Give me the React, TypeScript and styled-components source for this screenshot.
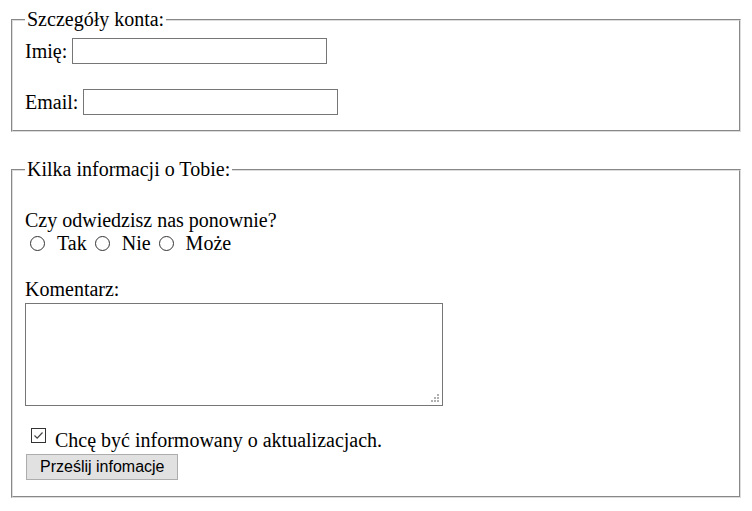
import React from "react";
import styled, { createGlobalStyle } from "styled-components";

const GlobalStyle = createGlobalStyle`
  body {
    margin: 8px;
    font-family: "Liberation Serif", "Times New Roman", serif;
    font-size: 20px;
    line-height: 23px;
    color: #000;
    background: #fff;
  }
`;

const Fieldset = styled.fieldset<{ $spaced?: boolean }>`
  margin: ${(p) => (p.$spaced ? "26px" : "0")} 3px 0 3px;
  padding: 7px 12px ${(p) => (p.$spaced ? "16px" : "15px")} 12px;
  border: 2px groove #dcdcdc;
  min-width: 0;
`;

const Legend = styled.legend`
  padding: 0 2px;
  line-height: 23px;
`;

const FieldRow = styled.div<{ $top?: number }>`
  display: flex;
  align-items: center;
  gap: 5px;
  margin-top: ${(p) => p.$top ?? 0}px;
`;

const TextInput = styled.input`
  box-sizing: border-box;
  width: 255px;
  height: 26px;
  border: 1px solid #767676;
  border-radius: 0;
  padding: 1px 2px;
  font: 13px "Liberation Sans", Arial, sans-serif;
  outline: none;
`;

const Line = styled.div<{ $top?: number }>`
  height: 23px;
  margin-top: ${(p) => p.$top ?? 0}px;
`;

const RadioRow = styled.div`
  display: flex;
  align-items: center;
  height: 23px;
  gap: 3px;
`;

const RadioItem = styled.label`
  display: inline-flex;
  align-items: center;
`;

const Circle = styled.span`
  box-sizing: border-box;
  width: 15px;
  height: 15px;
  border: 1px solid #333;
  border-radius: 50%;
  margin: 0 12px 0 5px;
  background: #fff;
`;

const AreaWrap = styled.div`
  position: relative;
  width: 418px;
  height: 103px;
  margin-top: 2px;
`;

const TextArea = styled.textarea`
  display: block;
  box-sizing: border-box;
  width: 100%;
  height: 100%;
  border: 1px solid #767676;
  border-radius: 0;
  resize: none;
  outline: none;
  margin: 0;
  padding: 2px;
  font: 13px "Liberation Mono", monospace;
`;

const Grip = styled.svg`
  position: absolute;
  right: 4px;
  bottom: 4px;
  pointer-events: none;
`;

const CheckRow = styled.label`
  display: flex;
  align-items: flex-start;
  height: 23px;
  margin-top: 23px;
`;

const CheckBox = styled.span`
  box-sizing: border-box;
  width: 15px;
  height: 15px;
  margin: -1px 9px 0 6px;
  border: 1px solid #333;
  background: #fff;
  display: inline-flex;
  align-items: center;
  justify-content: center;
`;

const CheckText = styled.span`
  line-height: 23px;
`;

const SubmitButton = styled.button`
  display: block;
  box-sizing: border-box;
  height: 26px;
  margin: 2px 0 0 1px;
  padding: 0 13px;
  font: 16px "Liberation Sans", Arial, sans-serif;
  color: #000;
  background: #e1e1e1;
  border: 1px solid #adadad;
  border-radius: 0;
`;

const options = ["Tak", "Nie", "Może"];

export default function App() {
  return (
    <>
      <GlobalStyle />
      <form onSubmit={(e) => e.preventDefault()}>
        <Fieldset>
          <Legend>Szczegóły konta:</Legend>
          <FieldRow>
            <span>Imię:</span>
            <TextInput type="text" />
          </FieldRow>
          <FieldRow $top={25}>
            <span>Email:</span>
            <TextInput type="text" />
          </FieldRow>
        </Fieldset>
        <Fieldset $spaced>
          <Legend>Kilka informacji o Tobie:</Legend>
          <Line $top={21}>Czy odwiedzisz nas ponownie?</Line>
          <RadioRow>
            {options.map((o) => (
              <RadioItem key={o}>
                <Circle />
                {o}
              </RadioItem>
            ))}
          </RadioRow>
          <Line $top={23}>Komentarz:</Line>
          <AreaWrap>
            <TextArea />
            <Grip width="8" height="8" viewBox="0 0 8 8">
              <g fill="#b0b0b0">
                <rect x="6" y="0" width="2" height="2" />
                <rect x="3" y="3" width="2" height="2" />
                <rect x="6" y="3" width="2" height="2" />
                <rect x="0" y="6" width="2" height="2" />
                <rect x="3" y="6" width="2" height="2" />
                <rect x="6" y="6" width="2" height="2" />
              </g>
            </Grip>
          </AreaWrap>
          <CheckRow>
            <CheckBox>
              <svg width="11" height="11" viewBox="0 0 11 11">
                <path d="M1.5 5.5 L4.2 8.2 L9.5 2.5" fill="none" stroke="#444" strokeWidth="1.2" />
              </svg>
            </CheckBox>
            <CheckText>Chcę być informowany o aktualizacjach.</CheckText>
          </CheckRow>
          <SubmitButton type="submit">Prześlij infomacje</SubmitButton>
        </Fieldset>
      </form>
    </>
  );
}
